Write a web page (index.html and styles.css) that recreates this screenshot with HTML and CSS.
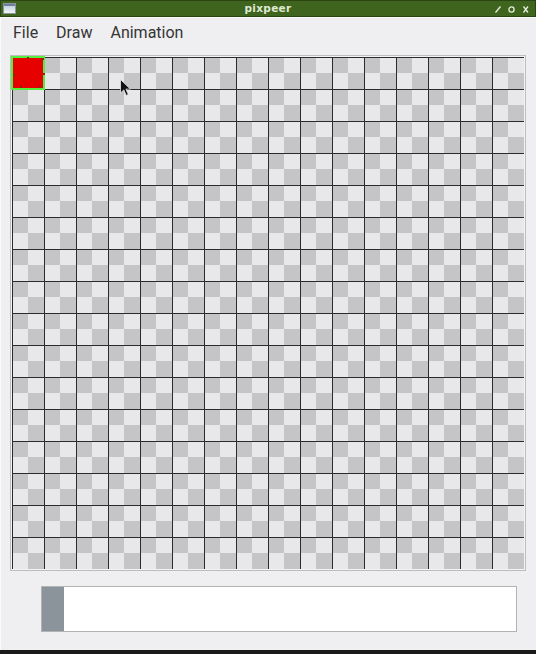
FILE: index.html
```html
<!DOCTYPE html>
<html>
<head>
<meta charset="utf-8">
<title>pixpeer</title>
<link rel="stylesheet" href="styles.css">
</head>
<body>
<div class="window">
  <header class="titlebar">
    <span class="app-icon"></span>
    <span class="title">pixpeer</span>
    <div class="controls">
      <svg width="34" height="8" viewBox="0 0 34 8">
        <path d="M0.5 7.5 L5.5 1.5" />
        <circle cx="16.5" cy="4.5" r="2.6" />
        <path d="M28.5 1.5 L33 7.5 M33 1.5 L28.5 7.5" />
      </svg>
    </div>
  </header>
  <nav class="menubar">
    <span class="menu-item">File</span>
    <span class="menu-item">Draw</span>
    <span class="menu-item">Animation</span>
  </nav>
  <main class="workspace">
    <div class="canvas-frame">
      <div class="canvas">
        <div class="pixel pixel-selected"></div>
      </div>
    </div>
    <div class="timeline">
      <div class="frame-thumb"></div>
    </div>
  </main>
  <div class="cursor">
    <svg width="12" height="18" viewBox="0 0 12 18">
      <path d="M0.5 0.5 L0.5 14 L3.8 10.9 L6.2 16.4 L8.3 15.5 L5.9 10.1 L10.4 10.1 Z" />
    </svg>
  </div>
</div>
<div class="taskbar"></div>
</body>
</html>
```
FILE: styles.css
```css
html, body {
  margin: 0;
  padding: 0;
}

body {
  width: 536px;
  height: 654px;
  overflow: hidden;
  background: #efeef0;
  font-family: Roboto, "Noto Sans", sans-serif;
}

.window {
  position: relative;
  height: 650px;
  background: #efeef0;
  border-left: 1px solid #fafafa;
  box-sizing: border-box;
}

.titlebar {
  height: 17px;
  box-sizing: border-box;
  border: 1px solid #2a4512;
  background: #3e641d;
  display: grid;
  grid-template-columns: 1fr auto 1fr;
  align-items: center;
  margin-left: -1px;
}

.app-icon {
  width: 13px;
  height: 11px;
  margin-left: 2px;
  box-sizing: border-box;
  border: 1px solid #8a949e;
  background: linear-gradient(to bottom, #6d7f9c 0, #6d7f9c 2px, #c6d3e0 2px, #f0f3f6 100%);
}

.title {
  font-family: "DejaVu Sans", sans-serif;
  font-weight: bold;
  font-size: 10.5px;
  color: #dfe8d2;
  line-height: 15px;
  letter-spacing: 0.3px;
}

.controls {
  justify-self: end;
  padding-right: 6px;
  display: flex;
  align-items: center;
}

.controls svg {
  display: block;
  fill: none;
  stroke: #e6eede;
  stroke-width: 1.3;
}

.menubar {
  height: 38px;
  box-sizing: border-box;
  padding: 5px 0 0 12px;
  display: flex;
  gap: 18px;
  border-top: 1px solid #f8f8f8;
}

.menu-item {
  font-size: 16px;
  line-height: 20px;
  color: #353535;
}

.workspace {
  display: flex;
  flex-direction: column;
}

.canvas-frame {
  margin-left: 9px;
  width: 516px;
  height: 516px;
  box-sizing: border-box;
  border: 1px solid #bdbdbf;
  padding: 1px;
  background: #f3f3f4;
}

.canvas {
  width: 512px;
  height: 512px;
  display: grid;
  grid-template-columns: repeat(16, 32px);
  grid-auto-rows: 32px;
  background:
    linear-gradient(to right, #2b2b2b 1px, transparent 1px) 0 0 / 32px 32px,
    linear-gradient(to bottom, #2b2b2b 1px, transparent 1px) 0 0 / 32px 32px,
    repeating-conic-gradient(#e8e7e9 0 25%, #c5c5c7 0 50%) 0 0 / 32px 32px;
}

.pixel {
  width: 34px;
  height: 34px;
  margin: -1px;
  box-sizing: border-box;
  background: #e60000;
}

.pixel-selected {
  border: 2px solid #55ee3d;
  position: relative;
}

.pixel-selected::after {
  content: "";
  position: absolute;
  left: 14px;
  top: -1px;
  width: 2px;
  height: 2px;
  background: #7a2a12;
  box-shadow:
    -14px 17px 0 #7a2a12,
    16px 16px 0 #7a2a12,
    -7px 29px 0 #7a2a12,
    12px 29px 0 #7a2a12,
    15px 1px 0 #7a2a12;
}

.timeline {
  margin: 15px 0 0 40px;
  width: 476px;
  height: 46px;
  box-sizing: border-box;
  border: 1px solid #b3b3b5;
  background: #ffffff;
  display: flex;
}

.frame-thumb {
  width: 22px;
  background: #8b939b;
}

.cursor {
  position: absolute;
  left: 119px;
  top: 79px;
}

.cursor svg {
  display: block;
  fill: #111;
  stroke: #e8e8e8;
  stroke-width: 0.8;
}

.taskbar {
  height: 4px;
  background: #1b1b1b;
}
```
